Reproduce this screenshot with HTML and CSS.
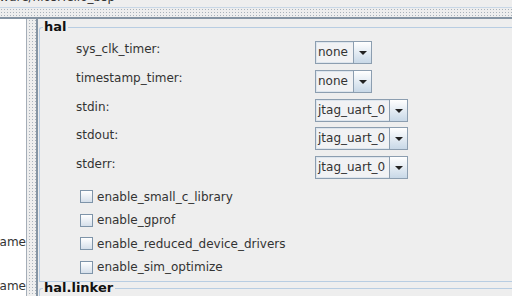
FILE: index.html
```html
<!DOCTYPE html>
<html lang="en">
<head>
    <meta charset="UTF-8">
    <title>BSP Editor - hal</title>
    <link rel="stylesheet" href="styles.css">
</head>
<body>

    <div class="pathbar"><span class="path">software/niosHello_bsp</span></div>
    <div class="hsplit"></div>

    <div class="main">
        <div class="side">
            <div class="side-row first"><span>Name</span></div>
            <div class="side-row"><span>Name</span></div>
        </div>
        <div class="vsplit"></div>

        <div class="view">
            <fieldset class="group">
                <legend>hal</legend>

                <div class="settings">
                    <label>sys_clk_timer:</label>
                    <div class="combo short"><span class="value">none</span><span class="arrow"></span></div>

                    <label>timestamp_timer:</label>
                    <div class="combo short"><span class="value">none</span><span class="arrow"></span></div>

                    <label>stdin:</label>
                    <div class="combo"><span class="value">jtag_uart_0</span><span class="arrow"></span></div>

                    <label>stdout:</label>
                    <div class="combo"><span class="value">jtag_uart_0</span><span class="arrow"></span></div>

                    <label>stderr:</label>
                    <div class="combo"><span class="value">jtag_uart_0</span><span class="arrow"></span></div>
                </div>

                <div class="checks">
                    <div class="check"><span class="box"></span>enable_small_c_library</div>
                    <div class="check"><span class="box"></span>enable_gprof</div>
                    <div class="check"><span class="box"></span>enable_reduced_device_drivers</div>
                    <div class="check"><span class="box"></span>enable_sim_optimize</div>
                </div>
            </fieldset>

            <fieldset class="group">
                <legend>hal.linker</legend>
            </fieldset>
        </div>
    </div>

</body>
</html>
```

FILE: styles.css
```css
body {
    margin: 0;
    width: 512px;
    height: 296px;
    overflow: hidden;
    background: #eeeeee;
    color: #333333;
    font-family: "DejaVu Sans", sans-serif;
    font-size: 12px;
}

.pathbar {
    height: 7px;
    overflow: hidden;
    border-bottom: 1px solid #c8d7e6;
}

.path {
    display: block;
    margin: -10px 0 0 -23px;
    line-height: 14px;
    white-space: nowrap;
}

/* splitter bars, dotted grip */
.hsplit {
    height: 9px;
    background-image: radial-gradient(#a9b2bb 0.6px, transparent 0.9px);
    background-size: 3px 3px;
    background-position: 0 3px;
    border-bottom: 2px solid #8594a3;
}

.main {
    display: flex;
    height: 277px;
}

.side {
    width: 26px;
    background: #ffffff;
    border-right: 1px solid #a5aeb8;
    padding-top: 216px;
}

.side-row {
    display: flex;
    justify-content: flex-end;
    overflow: hidden;
    height: 14px;
    line-height: 14px;
    white-space: nowrap;
}

.side-row.first {
    margin-bottom: 30px;
}

.vsplit {
    width: 7px;
    margin-left: 2px;
    background-image: radial-gradient(#a9b2bb 0.6px, transparent 0.9px);
    background-size: 3px 3px;
    background-position: 2px 0;
    border-right: 2px solid #8594a3;
}

.view {
    flex: 1;
    padding: 1px 0 0 1px;
    overflow: hidden;
}

.group {
    margin: 0 -20px 0 0;
    padding: 0;
    border: 1px solid #b8cde2;
    border-right: none;
    border-radius: 3px 0 0 0;
    min-width: 0;
}

.group + .group {
    margin-top: -1px;
    height: 20px;
}

.group legend {
    margin-left: 3px;
    padding: 0 2px 0 1px;
    font-weight: bold;
    font-size: 13px;
    line-height: 14px;
    color: #111111;
}

.settings {
    display: grid;
    grid-template-columns: 239px auto;
    grid-auto-rows: 23px;
    row-gap: 5.75px;
    justify-items: start;
    padding: 7px 0 0 36px;
}

.settings label {
    line-height: 14px;
    margin-top: 1px;
}

.combo {
    display: flex;
    height: 21px;
    border: 1px solid #8c9eb0;
    box-shadow: inset 0 0 0 1px #dde5ed;
    background: #f1f2f4;
}

.combo .value {
    box-sizing: border-box;
    width: 74px;
    padding-left: 2px;
    line-height: 21px;
    border-right: 1px solid #8c9eb0;
}

.combo.short .value {
    width: 38px;
}

.combo .arrow {
    width: 17px;
    position: relative;
    background: linear-gradient(#ffffff, #c8d8e7);
}

.combo .arrow::after {
    content: "";
    position: absolute;
    left: 5px;
    top: 9px;
    border-left: 4px solid transparent;
    border-right: 4px solid transparent;
    border-top: 4px solid #222222;
}

.checks {
    display: grid;
    grid-auto-rows: 23.5px;
    padding: 6px 0 0 40px;
    height: 96px;
}

.check {
    display: flex;
    align-items: center;
    gap: 4px;
    line-height: 14px;
}

.box {
    width: 11px;
    height: 11px;
    border: 1px solid #7e94a9;
    background: linear-gradient(#ffffff, #d5dfea);
}
```
